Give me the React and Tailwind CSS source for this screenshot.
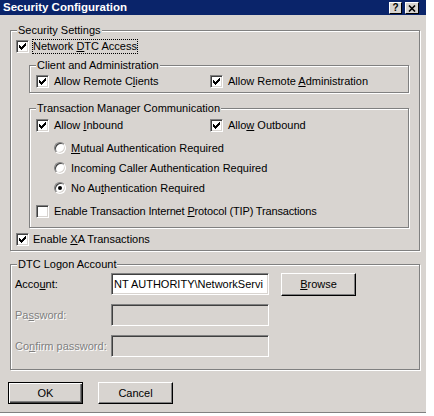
const BG = "bg-[#d8d4d0]";

function Check({ checked }) {
  // classic 7x7 tick, one 3px column per x
  const cols = [2, 3, 4, 3, 2, 1, 0];
  return (
    <span className="w-[13px] h-[13px] shrink-0 bg-white border border-t-[#808080] border-l-[#808080] border-b-white border-r-white shadow-[inset_1px_1px_0_#404040,inset_-1px_-1px_0_#d8d4d0] flex items-center justify-center">
      {checked && (
        <svg width="7" height="7" viewBox="0 0 7 7" shapeRendering="crispEdges">
          {cols.map((y, x) => (
            <rect key={x} x={x} y={y} width="1" height="3" fill="#000" />
          ))}
        </svg>
      )}
    </span>
  );
}

function Radio({ on }) {
  return (
    <span className="w-[12px] h-[12px] shrink-0 rounded-full bg-white border border-t-[#808080] border-l-[#808080] border-b-white border-r-white shadow-[inset_1px_1px_0_#404040,inset_-1px_-1px_0_#d8d4d0] flex items-center justify-center">
      {on && <span className="w-[4px] h-[4px] rounded-full bg-black" />}
    </span>
  );
}

function Group({ title, className = "", children }) {
  return (
    <div className={`relative border border-[#808080] shadow-[inset_1px_1px_0_#fff,1px_1px_0_#fff] ${className}`}>
      <span className={`absolute -top-[7px] left-[6px] px-[1px] ${BG} leading-[13px] whitespace-nowrap`}>
        {title}
      </span>
      {children}
    </div>
  );
}

function Button({ children, isDefault, className = "" }) {
  return (
    <div
      className={`${BG} flex items-center justify-center border ${
        isDefault ? "border-black" : "border-t-white border-l-white border-r-black border-b-black"
      } ${
        isDefault
          ? "shadow-[inset_1px_1px_0_#fff,inset_-1px_-1px_0_#404040,inset_-2px_-2px_0_#808080]"
          : "shadow-[inset_-1px_-1px_0_#808080]"
      } ${className}`}
    >
      {children}
    </div>
  );
}

function Field({ disabled, children }) {
  return (
    <div
      className={`w-[158px] h-[22px] ${disabled ? BG : "bg-white"} border border-t-[#808080] border-l-[#808080] border-b-white border-r-white shadow-[inset_1px_1px_0_#404040,inset_-1px_-1px_0_#d8d4d0] pl-[2px] flex items-center overflow-hidden whitespace-nowrap`}
    >
      {children}
    </div>
  );
}

const dim = "text-[#808080] [text-shadow:1px_1px_0_#fff]";

export default function App() {
  return (
    <div className={`w-[426px] h-[413px] ${BG} border-b border-[#808080] flex flex-col font-['Liberation_Sans',Arial,sans-serif] text-[11px] leading-[13px] text-black`}>
      {/* title bar */}
      <div className="h-[15px] bg-[#0a246a] flex items-center pl-[3px] pr-[7px]">
        <span className="flex-1 text-white font-bold text-[11.5px] leading-[15px]">Security Configuration</span>
        <div className="flex gap-[3px] mt-[1px]">
          <span className="w-[13px] h-[12px] bg-[#d8d4d0] border border-t-white border-l-white border-r-black border-b-black flex items-center justify-center font-bold text-[10px] leading-[10px]">
            ?
          </span>
          <span className="w-[14px] h-[12px] bg-[#d8d4d0] border border-t-white border-l-white border-r-black border-b-black flex items-center justify-center">
            <svg width="8" height="7" viewBox="0 0 8 7">
              <path d="M1 0.5 L7 6.5 M7 0.5 L1 6.5" stroke="#000" strokeWidth="1.6" />
            </svg>
          </span>
        </div>
      </div>

      <div className="flex flex-col pl-[10px] pr-[6px] pt-[15px]">
        {/* Security Settings */}
        <Group title="Security Settings" className="pl-[5px] pb-[4px]">
          <div className="mt-[9px] h-[13px] flex items-center">
            <Check checked />
            <span className="ml-[3px] border border-dotted border-black leading-[13px]">
              Network <u>D</u>TC Access
            </span>
          </div>

          <Group title="Client and Administration" className="mt-[12px] ml-[13px] mr-[10px] pt-[9px] pb-[4px] pl-[6px]">
            <div className="grid grid-cols-[174px_1fr]">
              <div className="flex items-center gap-[5px] h-[13px]">
                <Check checked />
                <span>Allow Remote C<u>l</u>ients</span>
              </div>
              <div className="flex items-center gap-[5px] h-[13px]">
                <Check checked />
                <span>Allow Remote <u>A</u>dministration</span>
              </div>
            </div>
          </Group>

          <Group title="Transaction Manager Communication" className="mt-[15px] ml-[13px] mr-[10px] pt-[10px] pb-[6px] pl-[6px]">
            <div className="grid grid-cols-[174px_1fr]">
              <div className="flex items-center gap-[5px] h-[13px]">
                <Check checked />
                <span>Allow <u>I</u>nbound</span>
              </div>
              <div className="flex items-center gap-[5px] h-[13px]">
                <Check checked />
                <span>Allo<u>w</u> Outbound</span>
              </div>
            </div>
            <div className="mt-[6px] ml-[18px] flex flex-col">
              <div className="h-[20px] flex items-center gap-[5px]">
                <Radio />
                <span><u>M</u>utual Authentication Required</span>
              </div>
              <div className="h-[20px] flex items-center gap-[5px]">
                <Radio />
                <span>Incoming Caller Authentication Required</span>
              </div>
              <div className="h-[20px] flex items-center gap-[5px]">
                <Radio on />
                <span>No Au<u>t</u>hentication Required</span>
              </div>
            </div>
            <div className="mt-[3px] h-[20px] flex items-center gap-[5px]">
              <Check />
              <span className="tracking-[-0.15px]">Enable Transaction Internet <u>P</u>rotocol (TIP) Transactions</span>
            </div>
          </Group>

          <div className="mt-[5px] h-[13px] flex items-center gap-[4px]">
            <Check checked />
            <span>Enable <u>X</u>A Transactions</span>
          </div>
        </Group>

        {/* DTC Logon Account */}
        <Group title="DTC Logon Account" className="mt-[13px] pl-[4px] pb-[12px]">
          <div className="mt-[7px] h-[24px] flex items-center">
            <span className="w-[96px]">Acco<u>u</u>nt:</span>
            <Field>{"NT AUTHORITY\\NetworkServi"}</Field>
            <Button className="ml-[12px] w-[75px] h-[23px]">
              <span><u>B</u>rowse</span>
            </Button>
          </div>
          <div className="mt-[8px] h-[22px] flex items-center">
            <span className={`w-[96px] ${dim}`}>Pa<u>s</u>sword:</span>
            <Field disabled />
          </div>
          <div className="mt-[9px] h-[22px] flex items-center">
            <span className={`w-[96px] ${dim}`}>Co<u>n</u>firm password:</span>
            <Field disabled />
          </div>
        </Group>

        {/* dialog buttons */}
        <div className="mt-[12px] -ml-[2px] flex gap-[15px]">
          <Button isDefault className="w-[75px] h-[22px]">OK</Button>
          <Button className="w-[75px] h-[22px]">Cancel</Button>
        </div>
      </div>
    </div>
  );
}
